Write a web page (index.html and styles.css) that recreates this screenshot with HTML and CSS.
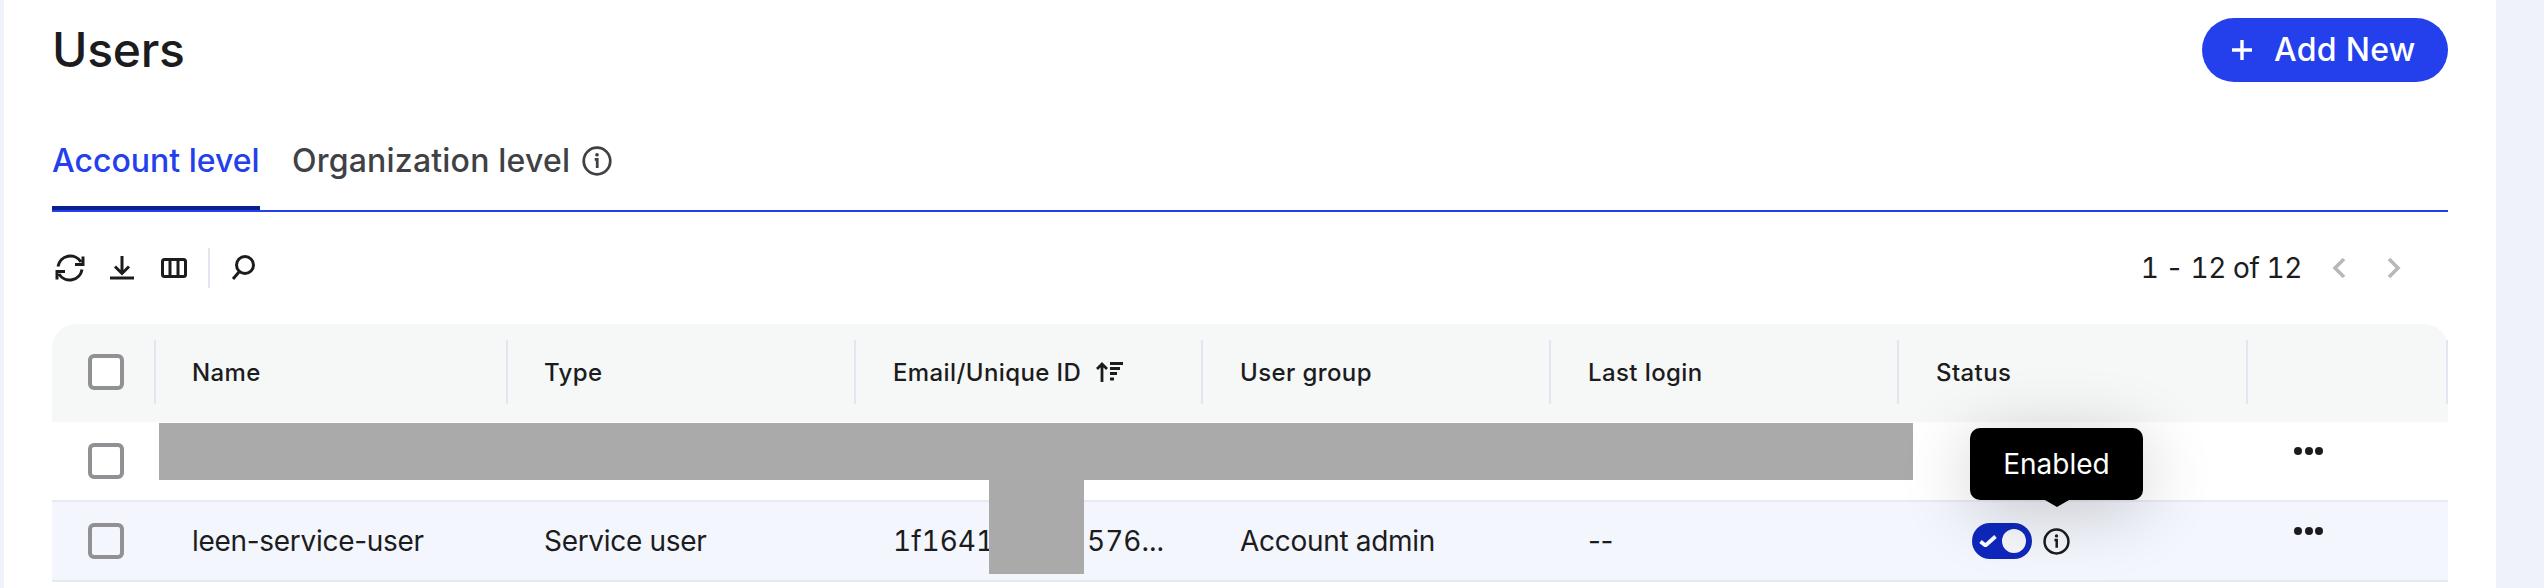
FILE: index.html
```html
<!DOCTYPE html>
<html lang="en">
<head>
<meta charset="utf-8">
<title>Users</title>
<link rel="stylesheet" href="styles.css">
</head>
<body>
<div class="page">
  <main class="panel">
    <header class="head">
      <h1 class="title">Users</h1>
      <button class="add-btn">
        <svg class="plus" viewBox="0 0 20 20"><path d="M10 0v20M0 10h20"/></svg>
        <span>Add New</span>
      </button>
    </header>

    <nav class="tabs">
      <div class="tab tab-active">Account level</div>
      <div class="tab">Organization level
        <svg class="info info-lg" viewBox="0 0 26 26"><circle cx="13" cy="13" r="11.5"/><path d="M11 11.5h2.2V19"/><circle class="info-dot" cx="13" cy="7.6" r="1.6"/></svg>
      </div>
    </nav>

    <section class="toolbar">
      <div class="tools">
        <svg class="tool" viewBox="0 0 36 36"><path d="M6 16.5A12.5 12.5 0 0 1 29 12M31 6.5v8h-8M30 19.5A12.5 12.5 0 0 1 7 24M5 29.5v-8h8"/></svg>
        <svg class="tool" viewBox="0 0 36 36"><path d="M6 28h24M18 6v17M11 16.5l7 7 7-7"/></svg>
        <svg class="tool" viewBox="0 0 36 36"><rect x="6.5" y="9.5" width="23" height="17" rx="2"/><path d="M14 9.5v17M22 9.5v17"/></svg>
        <span class="tool-sep"></span>
        <svg class="tool" viewBox="0 0 36 36"><circle cx="19" cy="15" r="8.5"/><path d="M13 22l-6 7"/></svg>
      </div>
      <div class="pager">
        <span class="pager-text">1 - 12 of 12</span>
        <svg class="chev" viewBox="0 0 14 22"><path d="M12 2L3 11l9 9"/></svg>
        <svg class="chev" viewBox="0 0 14 22"><path d="M2 2l9 9-9 9"/></svg>
      </div>
    </section>

    <section class="table">
      <div class="thead">
        <div class="th th-check"><span class="checkbox"></span></div>
        <div class="th">Name</div>
        <div class="th">Type</div>
        <div class="th">Email/Unique ID
          <svg class="sort" viewBox="0 0 27 20"><path d="M6 20V2M1 7l5-5 5 5"/><path d="M14 1.5h13M14 6.5h10M14 11.5h7M14 17h4"/></svg>
        </div>
        <div class="th">User group</div>
        <div class="th">Last login</div>
        <div class="th">Status</div>
        <div class="th"></div>
      </div>

      <div class="row">
        <div class="td td-check"><span class="checkbox"></span></div>
        <div class="td"></div>
        <div class="td"></div>
        <div class="td"></div>
        <div class="td"></div>
        <div class="td"></div>
        <div class="td td-status"></div>
        <div class="td td-menu"><span class="dots"><i></i><i></i><i></i></span></div>
      </div>

      <div class="row row-hover">
        <div class="td td-check"><span class="checkbox"></span></div>
        <div class="td">leen-service-user</div>
        <div class="td">Service user</div>
        <div class="td td-id"><span class="id-start">1f1641</span><span>576...</span></div>
        <div class="td">Account admin</div>
        <div class="td">--</div>
        <div class="td td-status">
          <span class="toggle">
            <svg class="toggle-check" viewBox="0 0 18 12"><path d="M1.5 6.5l5 4 10-9"/></svg>
            <span class="knob"></span>
          </span>
          <svg class="info info-sm" viewBox="0 0 26 26"><circle cx="13" cy="13" r="11.5"/><path d="M11 11.5h2.2V19"/><circle class="info-dot" cx="13" cy="7.6" r="1.6"/></svg>
          <div class="tooltip">Enabled</div>
        </div>
        <div class="td td-menu"><span class="dots"><i></i><i></i><i></i></span></div>
      </div>

      <div class="redact redact-bar"></div>
      <div class="redact redact-stem"></div>
    </section>
  </main>
</div>
</body>
</html>
```
FILE: styles.css
```css
* { box-sizing: border-box; }
html, body { margin: 0; padding: 0; height: 100%; }
body { font-family: Inter, "Liberation Sans", sans-serif; color: #1c1c1e; overflow: hidden; }

.page { height: 588px; background: #eff2f8; padding: 0 48px 0 4px; display: flex; overflow: hidden; }
.panel { flex: 1; min-width: 0; background: #fff; padding: 18px 48px 0; }

.head { display: flex; justify-content: space-between; align-items: center; height: 64px; }
.title { margin: 0; font-size: 48px; line-height: 64px; font-weight: 500; letter-spacing: -0.3px; color: #1c1c1e; }
.add-btn { display: flex; align-items: center; gap: 22px; height: 64px; width: 246px; padding: 0 0 0 30px; border: 0; border-radius: 32px; background: #2340ec; color: #fff; font: 500 32px/40px Inter, sans-serif; letter-spacing: 0.3px; }
.plus { width: 20px; height: 20px; fill: none; stroke: #fff; stroke-width: 3.4; }

.tabs { display: flex; gap: 32px; height: 130px; padding-top: 59px; border-bottom: 2px solid #2340ec; }
.tab { display: flex; align-items: flex-start; gap: 12px; font-size: 32px; line-height: 40px; font-weight: 500; letter-spacing: 0.2px; color: #3f4144; }
.tab-active { color: #2340ec; height: 69px; border-bottom: 4px solid #0a1f8f; width: 208px; white-space: nowrap; letter-spacing: 0; }

.info { fill: none; stroke: #1c1c1e; stroke-width: 2.4; }
.info-dot { fill: #1c1c1e; stroke: none; }
.info-lg { width: 30px; height: 30px; margin-top: 5px; stroke: #3f4144; }
.info-lg .info-dot { fill: #3f4144; }
.info-sm { width: 27px; height: 27px; margin-left: 11px; }

.toolbar { display: flex; justify-content: space-between; align-items: center; height: 112px; }
.tools { display: flex; align-items: center; gap: 16px; }
.tool { width: 36px; height: 36px; fill: none; stroke: #1c1c1e; stroke-width: 3; }
.tool-sep { width: 2px; height: 40px; background: #e3e6f0; }
.pager { display: flex; align-items: center; padding-right: 47px; }
.pager-text { font-size: 28px; line-height: 40px; margin-right: 30px; letter-spacing: -0.4px; font-variant-numeric: tabular-nums; }
.chev { width: 14px; height: 22px; fill: none; stroke: #b8b8b8; stroke-width: 3.6; }
.chev + .chev { margin-left: 41px; }

.table { position: relative; }
.thead, .row { display: grid; grid-template-columns: 104px 352px 348px 347px 348px 348px 349px 200px; }
.thead { height: 98px; padding: 16px 0 18px; background: #f6f8f8; border-radius: 24px 24px 0 0; }
.th { display: flex; align-items: center; padding-left: 36px; border-right: 2px solid #e3e6f0; font-size: 24px; font-weight: 500; letter-spacing: 0.4px; white-space: nowrap; }
.th:nth-child(n+4) { padding-left: 37px; }
.sort { width: 27px; height: 20px; margin-left: 15px; fill: none; stroke: #1c1c1e; stroke-width: 2.8; }

.row { height: 80px; border-bottom: 2px solid #e6eaf3; background: #fff; }
.row-hover { background: #f3f6fc; }
.td { display: flex; align-items: center; padding-left: 36px; font-size: 28px; letter-spacing: -0.3px; white-space: nowrap; }
.td:nth-child(n+4) { padding-left: 37px; }
.checkbox { display: block; width: 36px; height: 36px; border: 4px solid #909095; border-radius: 6px; background: #fff; }
.row-hover .checkbox { background: transparent; }
.td-id { letter-spacing: 0; font-variant-numeric: tabular-nums; }
.id-start { width: 194px; }

.td.td-status { position: relative; padding-left: 73px; }
.toggle { display: flex; align-items: center; position: relative; width: 60px; height: 36px; border-radius: 18px; background: #0f28bd; padding-left: 7px; }
.toggle-check { width: 18px; height: 12px; fill: none; stroke: #fff; stroke-width: 3.8; }
.knob { position: absolute; top: 6px; left: 30px; width: 24px; height: 24px; border-radius: 50%; background: #f7f8fb; }

.td.td-menu { padding-left: 46px; padding-bottom: 20px; }
.dots { display: flex; gap: 2.5px; }
.dots i { display: block; width: 8px; height: 8px; border-radius: 50%; background: #1c1c1e; }

.tooltip { position: absolute; z-index: 3; left: 71px; top: -74px; width: 173px; height: 72px; display: flex; align-items: center; justify-content: center; border-radius: 10px; background: #000; color: #fff; font-size: 28px; letter-spacing: 0; box-shadow: 0 10px 70px rgba(0,0,0,.2); }
.tooltip::after { content: ""; position: absolute; left: 75px; top: 72px; border: 12px solid transparent; border-bottom: 0; border-top: 7px solid #000; }

.redact { position: absolute; z-index: 2; background: #aaa; }
.redact-bar { left: 107px; top: 99px; width: 1754px; height: 57px; }
.redact-stem { left: 937px; top: 156px; width: 95px; height: 94px; }
```
